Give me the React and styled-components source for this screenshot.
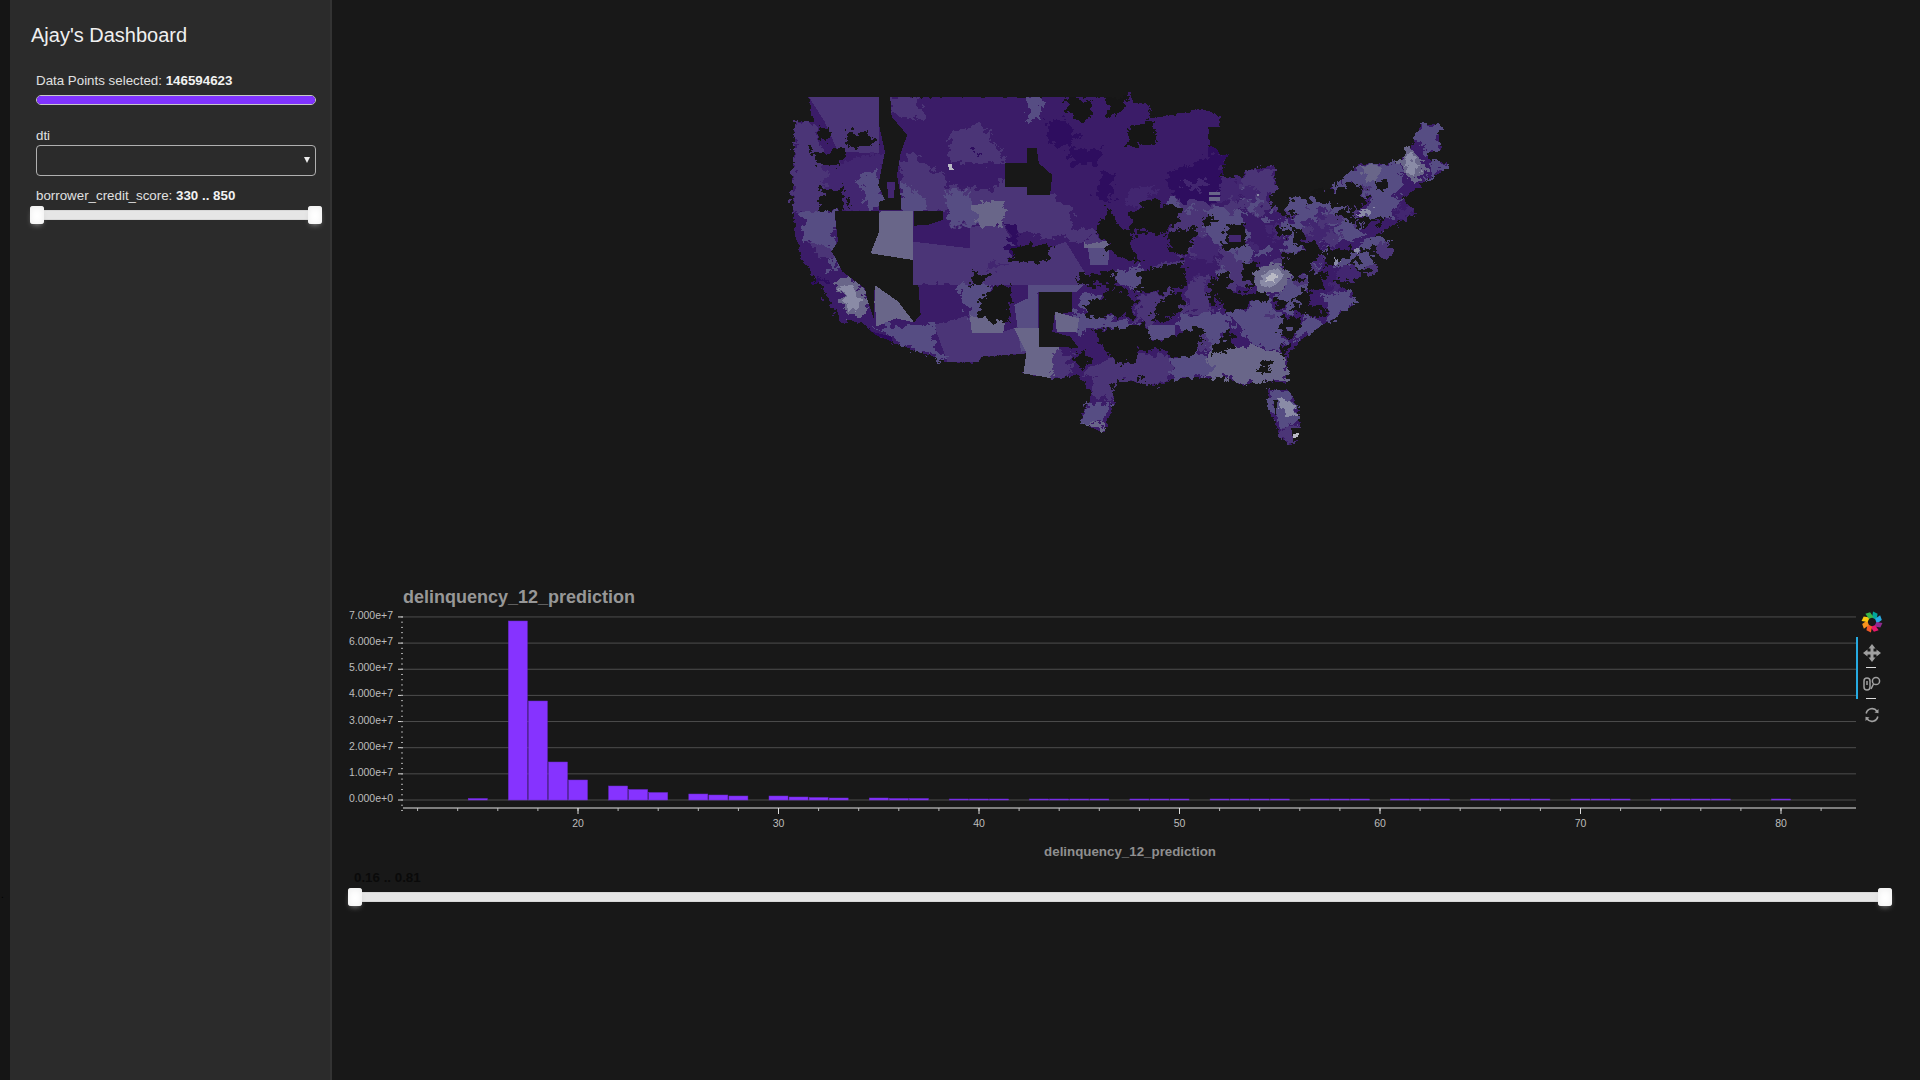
import React from "react";
import styled, { createGlobalStyle } from "styled-components";

const GlobalStyle = createGlobalStyle`
  html, body {
    margin: 0;
    padding: 0;
    height: 100%;
    background: #181818;
    font-family: "Liberation Sans", Arial, sans-serif;
  }
`;

const Page = styled.div`
  display: flex;
  width: 1920px;
  height: 1080px;
  overflow: hidden;
  background: #181818;
`;
const Gutter = styled.div`
  position: relative;
  width: 10px;
  flex: none;
  background: #151515;
`;
const StrayMark = styled.span`
  position: absolute;
  left: 1px;
  top: 889px;
  font-size: 10px;
  color: #000;
`;
const Sidebar = styled.aside`
  width: 322px;
  flex: none;
  box-sizing: border-box;
  padding: 24px 0 0 21px;
  background: #2b2b2b;
  border-right: 2px solid #333;
`;
const Title = styled.h1`
  margin: 0 0 26px;
  font-size: 20px;
  line-height: 23px;
  font-weight: 400;
  color: #f0f0f0;
`;
const Control = styled.div`
  width: 280px;
  margin-left: 5px;
  margin-bottom: ${(p) => p.$gap || 0}px;
`;
const Label = styled.div`
  font-size: 13.33px;
  line-height: 15px;
  margin-bottom: ${(p) => p.$gap || 0}px;
  color: #e0e0e0;
  b {
    color: #f2f2f2;
  }
`;
const Progress = styled.div`
  height: 10px;
  box-sizing: border-box;
  border: 1px solid #c8c8c8;
  border-radius: 5px;
  background: #444;
  overflow: hidden;
`;
const ProgressFill = styled.div`
  height: 100%;
  background: #8033ff;
`;
const SelectWrap = styled.div`
  position: relative;
  height: 31px;
  &::after {
    content: "";
    position: absolute;
    right: 6px;
    top: 12px;
    border-left: 3px solid transparent;
    border-right: 3px solid transparent;
    border-top: 6px solid #eee;
  }
`;
const Select = styled.select`
  appearance: none;
  display: block;
  width: 100%;
  height: 100%;
  box-sizing: border-box;
  background: #2b2b2b;
  border: 1px solid #b0b0b0;
  border-radius: 4px;
  color: #eee;
`;
const Slider = styled.div`
  position: relative;
  height: 10px;
  box-sizing: border-box;
  margin: ${(p) => p.$margin};
  background: #e6e6e6;
  border: 1px solid #d8d8d8;
`;
const Handle = styled.span`
  position: absolute;
  top: -5px;
  ${(p) => (p.$end ? "right: -8px;" : "left: -8px;")}
  width: 14px;
  height: 18px;
  border-radius: 3px;
  background: #fff;
  box-shadow: inset 0 1px 7px #ebebeb, 0 3px 6px -3px #bbb;
`;
const Main = styled.main`
  flex: 1;
  display: flex;
  flex-direction: column;
`;
const MapFrame = styled.section`
  height: 580px;
  box-sizing: border-box;
  padding: 85px 0 0 448px;
`;
const MapSvg = styled.svg`
  display: block;
  width: 700px;
  height: 370px;
`;
const ChartRow = styled.section`
  display: flex;
  height: 290px;
`;
const ChartSvg = styled.svg`
  display: block;
  width: 1524px;
  height: 290px;
`;
const ChartTitle = styled.text`
  font-size: 18px;
  font-weight: 700;
  fill: #979797;
`;
const AxisTitle = styled.text`
  font-size: 13.33px;
  font-weight: 700;
  fill: #8f8f8f;
  text-anchor: middle;
`;
const TickLabel = styled.text`
  font-size: 10.5px;
  fill: #bdbdbd;
  text-anchor: ${(p) => p.$anchor};
`;
const Toolbar = styled.div`
  display: flex;
  flex-direction: column;
  width: 30px;
  padding-top: 30px;
`;
const LogoSlot = styled.div`
  height: 27px;
  padding-left: 5px;
`;
const Tool = styled.div`
  position: relative;
  display: flex;
  align-items: center;
  justify-content: center;
  width: 30px;
  height: 31px;
  box-sizing: border-box;
  border-left: 2px solid ${(p) => (p.$active ? "#26aae1" : "transparent")};
  padding-right: 1px;
  &::after {
    content: "";
    display: ${(p) => (p.$rule ? "block" : "none")};
    position: absolute;
    left: 8px;
    bottom: 0;
    width: 10px;
    height: 1px;
    background: #ddd;
  }
`;
const RangeLabel = styled.div`
  margin-left: 22px;
  font-size: 13.33px;
  font-weight: 700;
  line-height: 15px;
  color: #0a0a0a;
`;

const shade = {
  d0: "#2e0a5e",
  d1: "#3a1b68",
  d2: "#432670",
  d3: "#4b3577",
  d4: "#574d83",
  d5: "#696689",
  d6: "#8a8ba6",
  d7: "#b9bac4",
};
const HOLE = "#181818";

const land = [
  "65,36 730,36 760,50 785,18 790,50 830,60 825,100 860,95 950,72 985,95 985,125 960,125 960,190 1000,215 985,275 1035,280 1040,260 1105,243 1110,300 1090,360 1140,400 1190,360 1250,295 1300,238 1385,235 1415,185 1425,150 1440,115 1475,125 1478,195 1450,205 1455,225 1500,240 1450,285 1395,340 1425,385 1375,420 1310,470 1300,500 1260,555 1240,590 1280,620 1285,660 1220,715 1170,760 1135,810 1135,895 1085,885 1040,900 990,875 950,878 880,880 840,900 810,895 760,880 720,880 750,945 725,1040 680,1020 675,985 700,935 670,870 610,880 590,875 545,865 552,805 450,815 445,830 375,830 280,785 250,770 215,750 175,710 135,700 100,620 85,590 50,520 35,450 28,345 35,110 75,110",
  "1095,915 1135,915 1150,940 1165,1010 1160,1060 1145,1080 1120,1050 1095,975",
];

// soft edged zones: county groups with a jagged outline
const roughZones = [
  ["d3", "35,110 75,110 100,220 100,380 30,380 28,345"],
  ["d2", "100,240 235,200 235,375 100,380"],
  ["d4", "178,280 215,250 235,345 220,375 192,375 192,340"],
  ["d3", "247,36 305,36 325,90 320,105 250,90"],
  ["d3", "380,150 450,110 500,210 505,235 380,235"],
  ["d0", "430,195 450,200 440,215"],
  ["d3", "270,240 300,205 340,260 375,260 375,380 270,375"],
  ["d4", "270,290 325,340 332,378 272,378"],
  ["d3", "375,300 470,315 503,280 610,330 650,370 655,430 605,465 500,422 375,422"],
  ["d4", "375,315 415,310 445,420 375,420"],
  ["d5", "430,365 460,345 510,360 497,422 445,422"],
  ["d4", "553,36 585,36 585,105 555,110"],
  ["d0", "600,100 640,105 668,160 650,190 605,180"],
  ["d0", "650,190 720,190 715,240 650,240"],
  ["d0", "720,265 745,265 745,345 708,340"],
  ["d0", "865,265 950,225 960,190 1000,215 985,275 985,350 895,350"],
  ["d2", "905,295 950,280 965,300 920,320"],
  ["d2", "780,310 850,310 810,365 775,360"],
  ["d2", "985,275 1035,280 1030,350 985,350"],
  ["d3", "1040,260 1105,243 1110,300 1090,360 1085,390 1045,390 1030,310"],
  ["d4", "1030,310 1080,350 1060,390 1040,370"],
  ["d3", "880,350 960,350 985,390 985,500 920,520 880,440"],
  ["d1", "830,440 880,440 880,510 830,530"],
  ["d2", "920,460 985,450 975,530 925,520"],
  ["d3", "985,500 1045,490 1060,530 1040,560 980,560"],
  ["d3", "1040,550 1060,600 1010,620 970,580"],
  ["d4", "950,370 1040,380 1040,500 1000,500 950,440"],
  ["d3", "860,530 905,520 905,540 830,550"],
  ["d3", "640,430 710,430 710,470 640,470"],
  ["d0", "505,420 535,425 530,475 515,470"],
  ["d0", "510,480 560,490 540,530 510,520"],
  ["d2", "465,530 510,530 480,565 465,560"],
  ["d1", "315,600 400,600 420,690 350,710 325,680"],
  ["d4", "390,600 470,600 470,625 445,700 425,690"],
  ["d4", "215,725 350,720 345,790 375,830 280,785"],
  ["d3", "610,805 655,805 650,880 610,880"],
  ["d4", "660,680 800,715 790,730 700,730 660,750"],
  ["d4", "750,560 810,540 805,620 760,600"],
  ["d4", "680,620 720,640 690,680 670,660"],
  ["d3", "800,630 880,620 830,720 800,710"],
  ["d4", "900,690 990,680 990,770 960,780 895,730"],
  ["d3", "915,595 960,580 965,685 915,680"],
  ["d4", "1000,685 1100,650 1130,720 1130,800 1060,780"],
  ["d5", "960,790 1060,780 1130,810 1135,895 1085,885 1040,900 990,875 950,878"],
  ["d4", "1050,690 1110,680 1125,750 1080,770"],
  ["d4", "1035,740 1060,745 1055,775"],
  ["d1", "1140,770 1160,760 1135,810"],
  ["d4", "875,820 950,800 970,870 880,880"],
  ["d3", "670,870 720,830 800,810 870,810 880,875 840,900 760,880 720,880"],
  ["d3", "700,880 750,880 745,945 700,935"],
  ["d4", "680,960 745,950 725,1010 680,1020"],
  ["d5", "680,1012 730,1020 725,1042"],
  ["d4", "1095,915 1135,915 1150,940 1165,1010 1130,1030 1095,975"],
  ["d6", "1115,940 1145,945 1160,995 1128,985"],
  ["d3", "1130,1030 1160,1020 1145,1080 1120,1050"],
  ["d4", "1220,620 1280,620 1285,660 1225,715"],
  ["d1", "1190,620 1215,620 1215,665 1190,665"],
  ["d4", "1180,690 1220,715 1150,770"],
  ["d4", "1140,570 1200,580 1165,650 1110,650"],
  ["d4", "1150,370 1250,350 1310,410 1290,470 1200,470 1160,430"],
  ["d2", "1175,400 1260,420 1230,470 1180,450"],
  ["d4", "1250,295 1300,238 1385,235 1395,300 1350,370 1320,340 1290,290"],
  ["d5", "1300,240 1340,240 1340,285 1310,285"],
  ["d5", "1385,230 1415,185 1450,260 1410,295"],
  ["d6", "1398,225 1416,205 1436,255 1410,270"],
  ["d4", "1440,115 1475,125 1478,195 1450,205 1420,155"],
  ["d4", "1455,225 1500,240 1450,285"],
  ["d2", "1390,360 1425,385 1380,420"],
  ["d4", "1340,330 1395,340 1370,400 1300,400"],
  ["d6", "1295,378 1325,375 1310,405"],
  ["d4", "1280,500 1310,470 1300,500 1260,555 1240,540"],
  ["d4", "50,378 130,380 120,460 130,500 55,470"],
  ["d3", "70,470 130,500 125,520 75,510"],
  ["d1", "50,470 100,540 60,530"],
  ["d0", "85,570 110,590 80,590"],
  ["d4", "110,520 140,535 110,560"],
  ["d1", "95,610 130,640 175,700 135,705"],
  ["d5", "120,590 160,570 190,620 200,660 175,695 150,695 130,620"],
  ["d6", "135,610 165,600 185,650 160,680 145,650"],
];

// zones with the straight borders the map shows out west
const straightZones = [
  ["d3", "65,36 222,36 222,205 130,200 100,110"],
  ["d5", "222,378 298,378 298,525 203,505 222,440"],
  ["d1", "300,422 365,405 425,425 425,490 300,470"],
  ["d3", "298,470 425,490 425,425 500,422 545,520 640,470 700,600 298,600"],
  ["d1", "375,235 503,235 503,280 470,315 400,300 375,310"],
  ["d3", "345,720 425,690 500,740 545,720 552,805 450,815 445,830 375,830"],
  ["d5", "425,690 505,700 500,745 430,745"],
  ["d4", "525,660 578,625 578,785 540,800"],
  ["d5", "525,730 580,730 625,785 625,860 610,880 545,865 552,805"],
  ["d4", "555,600 680,600 665,620 580,620 555,650"],
  ["d5", "680,468 738,468 738,490 680,490"],
  ["d4", "690,490 738,490 735,540 695,540"],
  ["d5", "212,600 265,650 300,712 260,700 215,725"],
  ["d4", "250,605 275,605 275,630 262,645 250,635"],
  ["d4", "825,720 885,720 885,765 825,765"],
];

// small county blobs that break up the eastern half, fixed seed so every run is the same
const seeded = (seed) => () => {
  seed = (seed * 16807) % 2147483647;
  return seed / 2147483647;
};
const speckle = (() => {
  const rnd = seeded(4242);
  const north = ["d2", "d3", "d3", "d4"];
  const south = ["d3", "d4", "d4", "d5", "d5"];
  return Array.from({ length: 90 }, () => {
    const cx = 880 + rnd() * 480;
    const top = 330 + ((cx - 880) / 480) * -30;
    const cy = top + rnd() * (840 - top - ((cx - 880) / 480) * 300);
    const r = 8 + rnd() * 16;
    const pts = [0, 1, 2, 3, 4].map((i) => {
      const a = (i / 5) * Math.PI * 2;
      return `${(cx + r * Math.cos(a)).toFixed(0)},${(cy + r * 1.3 * Math.sin(a)).toFixed(0)}`;
    });
    const tones = cy > 640 ? south : north;
    return [tones[Math.floor(rnd() * tones.length)], pts.join(" ")];
  });
})();

const roughHoles = [
  "85,125 105,125 110,165 92,165",
  "150,140 190,140 215,165 210,185 150,190",
  "72,205 130,195 150,185 135,240 85,240",
  "60,180 75,180 75,200 60,200",
  "90,310 145,305 150,378 90,378",
  "643,36 680,36 700,60 698,100 660,105 645,75",
  "730,36 778,36 780,50 755,90 735,100",
  "777,125 808,125 835,100 845,175 795,185 780,180",
  "555,480 605,480 605,528 540,530 510,525 530,495",
  "427,550 460,570 460,600 427,600",
  "485,600 522,600 515,660 510,715 445,700 450,640 470,625",
  "668,570 720,565 750,545 755,600 668,598",
  "740,365 760,430 800,450 785,490 810,530 770,520 735,500 735,470 712,462 712,425",
  "780,385 830,345 905,375 880,425 865,440 780,440 790,410",
  "805,560 850,545 905,530 910,590 880,620 805,620",
  "685,655 720,640 745,600 790,640 795,700 750,690 690,700",
  "705,735 790,725 820,715 830,760 805,785 800,820 770,840 750,830 735,810 720,780 705,760",
  "835,660 880,620 905,620 895,685 860,700 840,720",
  "810,770 880,755 930,725 950,740 925,820 880,815 860,790 810,800",
  "660,800 690,800 700,820 685,850 660,830",
  "800,875 815,870 810,900",
  "965,565 990,600 975,660 960,660",
  "1005,720 1020,790 970,810 965,790 990,760",
  "990,640 1030,620 1095,620 1085,650 1040,660 1020,680 995,680",
  "1035,530 1070,540 1060,610 1040,590",
  "1120,510 1150,510 1175,490 1210,490 1190,560 1155,590 1130,550",
  "1000,415 1040,420 1045,490 990,495 1000,470",
  "880,440 900,450 895,490 875,480",
  "905,440 935,420 925,470 905,510",
  "950,395 975,390 965,420 945,420",
  "1110,425 1140,420 1135,460 1115,450",
  "1190,320 1250,310 1290,290 1320,340 1300,370 1260,370 1200,345",
  "1340,285 1355,285 1355,320 1340,320",
  "1270,390 1300,400 1280,420",
  "1325,400 1365,395 1340,425",
  "1120,700 1165,695 1170,730 1140,760 1120,735",
  "1135,665 1180,660 1220,670 1215,695 1170,690",
  "1170,620 1190,620 1185,665 1145,645",
  "1065,860 1090,825 1105,860",
  "1125,800 1140,765 1140,800 1125,830",
  "1220,490 1290,490 1260,530 1240,540 1220,540",
  "1180,560 1225,560 1215,615 1180,615",
  "870,450 905,430 920,480 900,520 870,500",
  "980,570 1005,560 1010,640 985,660",
  "1105,640 1140,650 1120,670",
  "1165,480 1200,470 1220,500 1190,530",
  "1250,380 1290,370 1280,400 1250,400",
  "1150,430 1175,430 1170,480 1150,480",
  "1290,400 1330,395 1310,440",
  "1265,320 1285,300 1300,340 1270,360",
];

const straightHoles = [
  "222,36 247,36 250,95 285,150 270,205 262,270 272,345 272,375 222,375 222,350 235,345 220,300 235,200 222,120",
  "122,378 222,378 222,440 203,505 298,525 298,600 310,600 315,690 300,712 265,650 212,600 210,700 195,640 190,610 140,560 125,520 115,500 130,470",
  "300,378 365,378 365,405 330,420 300,422",
  "503,235 553,235 553,190 575,190 580,235 610,270 605,330 553,330 553,305 503,305",
  "580,620 655,620 655,680 615,690 610,740 650,755 670,790 625,785 580,785",
  "1145,1030 1165,1030 1165,1060 1150,1070",
  "1105,945 1115,945 1110,990",
];

// bright spots that sit over the holes around them
const highlights = [
  ["d5", "1060,560 1110,530 1150,570 1120,620 1070,620"],
  ["d6", "1078,570 1110,548 1132,572 1100,608 1078,605"],
  ["d7", "1088,578 1108,565 1116,578 1094,596"],
  ["d6", "1288,490 1304,490 1290,510"],
  ["d6", "1242,515 1258,530 1242,544"],
];

const topDetails = [
  ["d2", "240,290 258,290 255,340 242,340"],
  ["d2", "1005,450 1032,450 1032,472 1005,472"],
  ["d5", "615,680 670,700 665,740 620,740"],
  ["d4", "1133,725 1150,725 1147,738 1136,738"],
  ["d5", "961,321 985,321 985,330 961,330"],
  ["d5", "961,337 985,337 985,347 961,347"],
  ["d7", "375,237 385,237 385,248 390,255 380,255"],
  ["d0", "180,710 205,740 250,755 250,770 215,750"],
  ["d7", "1150,1048 1165,1042 1160,1055 1150,1060"],
  ["d6", "1068,328 1073,328 1073,332 1068,332"],
];

const UsMap = () => (
  <MapSvg viewBox="0 0 1568 1110" preserveAspectRatio="none" shapeRendering="crispEdges">
    <defs>
      <filter id="jag" filterUnits="userSpaceOnUse" x="0" y="0" width="1568" height="1110">
        <feTurbulence type="fractalNoise" baseFrequency="0.06 0.05" numOctaves="4" seed="7" />
        <feDisplacementMap in="SourceGraphic" scale="44" xChannelSelector="R" yChannelSelector="G" />
      </filter>
      <filter id="coast" filterUnits="userSpaceOnUse" x="0" y="0" width="1568" height="1110">
        <feTurbulence type="fractalNoise" baseFrequency="0.09 0.07" numOctaves="3" seed="3" />
        <feDisplacementMap in="SourceGraphic" scale="18" xChannelSelector="R" yChannelSelector="G" />
      </filter>
      <clipPath id="border">
        <rect x="0" y="36" width="760" height="1074" />
        <rect x="760" y="0" width="808" height="1110" />
      </clipPath>
    </defs>
    <g clipPath="url(#border)">
      <g filter="url(#coast)">
        {land.map((p) => (
          <polygon key={p} points={p} fill={shade.d1} />
        ))}
      </g>
      {straightZones.map(([c, p]) => (
        <polygon key={p} points={p} fill={shade[c]} />
      ))}
      <g filter="url(#jag)">
        {roughZones.map(([c, p]) => (
          <polygon key={p} points={p} fill={shade[c]} />
        ))}
        {speckle.map(([c, p]) => (
          <polygon key={p} points={p} fill={shade[c]} />
        ))}
      </g>
      <g filter="url(#jag)">
        {roughHoles.map((p) => (
          <polygon key={p} points={p} fill={HOLE} />
        ))}
      </g>
      {straightHoles.map((p) => (
        <polygon key={p} points={p} fill={HOLE} />
      ))}
      <g filter="url(#coast)">
        {highlights.map(([c, p]) => (
          <polygon key={p} points={p} fill={shade[c]} />
        ))}
      </g>
      {topDetails.map(([c, p]) => (
        <polygon key={p} points={p} fill={shade[c]} />
      ))}
    </g>
  </MapSvg>
);

// bar heights in px, keyed by the bin on the x axis
const bars = {
  15: 1.5, 17: 179, 18: 99, 19: 38, 20: 20, 22: 14, 23: 10.5, 24: 7.5, 26: 6, 27: 5, 28: 4,
  30: 4, 31: 3, 32: 2.5, 33: 2, 35: 2, 36: 1.5, 37: 1.5,
  39: 1, 40: 1, 41: 1, 43: 1, 44: 1, 45: 1, 46: 1, 48: 1, 49: 1, 50: 1, 52: 1, 53: 1, 54: 1, 55: 1,
  57: 1, 58: 1, 59: 1, 61: 1, 62: 1, 63: 1, 65: 1, 66: 1, 67: 1, 68: 1, 70: 1, 71: 1, 72: 1,
  74: 1, 75: 1, 76: 1, 77: 1, 80: 1,
};
const xPos = (v) => 578 + (v - 20) * 20.05;
const yValues = [7, 6, 5, 4, 3, 2, 1, 0];
const yPos = (v) => 800 - v * 26.15;
const xMinors = Array.from({ length: 37 }, (_, i) => 12 + i * 2);
const yMinors = Array.from({ length: 38 }, (_, i) => 7 - i / 5);

const Histogram = () => (
  <ChartSvg viewBox="332 580 1524 290">
    <ChartTitle x="403" y="603">delinquency_12_prediction</ChartTitle>
    {yValues.map((v) => (
      <g key={v}>
        <line x1="403" x2="1856" y1={yPos(v)} y2={yPos(v)} stroke="#4d4d4d" />
        <line x1="398" x2="403" y1={yPos(v)} y2={yPos(v)} stroke="#ddd" />
        <TickLabel $anchor="end" x="393" y={yPos(v) + 2}>{`${v}.000e+${v === 0 ? 0 : 7}`}</TickLabel>
      </g>
    ))}
    {yMinors.map((v) => (
      <line key={v} x1="401" x2="403" y1={yPos(v)} y2={yPos(v)} stroke="#aaa" />
    ))}
    {Object.entries(bars).map(([bin, h]) => (
      <rect key={bin} x={xPos(+bin) - 9.5} width="19" y={800 - h} height={h} fill="#8633ff" stroke="#6a28cc" strokeWidth="0.5" />
    ))}
    <line x1="403" x2="1856" y1="808" y2="808" stroke="#e4e4e4" />
    {xMinors.map((v) => (
      <line key={v} x1={xPos(v)} x2={xPos(v)} y1="808" y2="811" stroke="#bbb" />
    ))}
    {[20, 30, 40, 50, 60, 70, 80].map((v) => (
      <g key={v}>
        <line x1={xPos(v)} x2={xPos(v)} y1="808" y2="814" stroke="#ddd" />
        <TickLabel $anchor="middle" x={xPos(v)} y="827">{v}</TickLabel>
      </g>
    ))}
    <AxisTitle x="1130" y="856">delinquency_12_prediction</AxisTitle>
  </ChartSvg>
);

const logoColors = ["#00a79d", "#27aae1", "#8e2a8e", "#e6176c", "#f15a29", "#f7941d", "#f9c80e", "#39b54a"];

const wedge = (i) => {
  const step = Math.PI / 4;
  const a = -Math.PI / 2 + i * step;
  const pt = (r, t) => `${(12 + r * Math.cos(t)).toFixed(2)},${(12 + r * Math.sin(t)).toFixed(2)}`;
  return [pt(4.5, a), pt(10.5, a + 0.1), pt(10, a + step * 0.75), pt(5, a + step + 0.35)].join(" ");
};

const BokehLogo = () => (
  <svg width="22" height="24" viewBox="1 0 22 24">
    {logoColors.map((c, i) => (
      <polygon key={c} points={wedge(i)} fill={c} />
    ))}
  </svg>
);

const PanIcon = () => (
  <svg width="18" height="18" viewBox="0 0 18 18" fill="#a0a0a0" stroke="none">
    <rect x="7.5" y="3" width="3" height="12" />
    <rect x="3" y="7.5" width="12" height="3" />
    <polygon points="9,0 12.5,4.5 5.5,4.5" />
    <polygon points="9,18 12.5,13.5 5.5,13.5" />
    <polygon points="0,9 4.5,5.5 4.5,12.5" />
    <polygon points="18,9 13.5,5.5 13.5,12.5" />
  </svg>
);

const WheelZoomIcon = () => (
  <svg width="18" height="16" viewBox="0 0 18 16" fill="none" stroke="#a0a0a0" strokeWidth="1.5">
    <rect x="1" y="2" width="6" height="12" rx="3" />
    <line x1="4" y1="5" x2="4" y2="9" />
    <circle cx="13" cy="5" r="3.6" />
    <line x1="10.5" y1="8" x2="8" y2="13" />
  </svg>
);

const ResetIcon = () => (
  <svg width="16" height="16" viewBox="0 0 16 16" fill="none" stroke="#a0a0a0" strokeWidth="1.6">
    <path d="M2.2 6.5A6 6 0 0 1 13 4.2" />
    <path d="M13.8 9.5A6 6 0 0 1 3 11.8" />
    <polygon points="14.5,2 14.5,6.2 10.5,5.6" fill="#a0a0a0" stroke="none" />
    <polygon points="1.5,14 1.5,9.8 5.5,10.4" fill="#a0a0a0" stroke="none" />
  </svg>
);

const App = () => (
  <Page>
    <GlobalStyle />
    <Gutter>
      <StrayMark>.</StrayMark>
    </Gutter>
    <Sidebar>
      <Title>Ajay's Dashboard</Title>
      <Control $gap={23}>
        <Label $gap={7}>
          Data Points selected: <b>146594623</b>
        </Label>
        <Progress>
          <ProgressFill style={{ width: "100%" }} />
        </Progress>
      </Control>
      <Control $gap={12}>
        <Label $gap={2}>dti</Label>
        <SelectWrap>
          <Select defaultValue="">
            <option value=""></option>
          </Select>
        </SelectWrap>
      </Control>
      <Control>
        <Label>
          borrower_credit_score: <b>330 .. 850</b>
        </Label>
        <Slider $margin="7px 1px 0 1px">
          <Handle />
          <Handle $end />
        </Slider>
      </Control>
    </Sidebar>
    <Main>
      <MapFrame>
        <UsMap />
      </MapFrame>
      <ChartRow>
        <Histogram />
        <Toolbar>
          <LogoSlot>
            <BokehLogo />
          </LogoSlot>
          <Tool $active $rule>
            <PanIcon />
          </Tool>
          <Tool $active $rule>
            <WheelZoomIcon />
          </Tool>
          <Tool>
            <ResetIcon />
          </Tool>
        </Toolbar>
      </ChartRow>
      <RangeLabel>0.16 .. 0.81</RangeLabel>
      <Slider $margin="7px 35px 0 23px">
        <Handle />
        <Handle $end />
      </Slider>
    </Main>
  </Page>
);

export default App;
